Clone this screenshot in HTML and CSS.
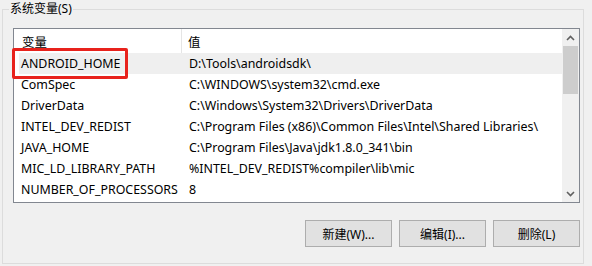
FILE: index.html
```html
<!DOCTYPE html>
<html lang="zh-CN">
  <head>
    <meta charset="UTF-8" />
    <meta name="viewport" content="width=device-width, initial-scale=1.0" />
    <title>系统变量</title>
    <link rel="stylesheet" href="styles.css">
  </head>
  <body>
    <fieldset class="group">
      <legend>系统变量(S)</legend>
      <div class="listbox">
        <div class="list">
          <div class="header">
            <div class="name">变量</div>
            <div class="value">值</div>
          </div>
          <div class="row selected">
            <div class="name marked">ANDROID_HOME</div>
            <div class="value">D:\Tools\androidsdk\</div>
          </div>
          <div class="row">
            <div class="name">ComSpec</div>
            <div class="value">C:\WINDOWS\system32\cmd.exe</div>
          </div>
          <div class="row">
            <div class="name">DriverData</div>
            <div class="value">C:\Windows\System32\Drivers\DriverData</div>
          </div>
          <div class="row">
            <div class="name">INTEL_DEV_REDIST</div>
            <div class="value">C:\Program Files (x86)\Common Files\Intel\Shared Libraries\</div>
          </div>
          <div class="row">
            <div class="name">JAVA_HOME</div>
            <div class="value">C:\Program Files\Java\jdk1.8.0_341\bin</div>
          </div>
          <div class="row">
            <div class="name">MIC_LD_LIBRARY_PATH</div>
            <div class="value">%INTEL_DEV_REDIST%compiler\lib\mic</div>
          </div>
          <div class="row">
            <div class="name">NUMBER_OF_PROCESSORS</div>
            <div class="value">8</div>
          </div>
        </div>
        <div class="scrollbar">
          <div class="arrow">
            <svg width="9" height="6" viewBox="0 0 9 6"><path d="M1 5 L4.5 1.5 L8 5" fill="none" stroke="#606060" stroke-width="1.6"/></svg>
          </div>
          <div class="track"><div class="thumb"></div></div>
          <div class="arrow">
            <svg width="9" height="6" viewBox="0 0 9 6"><path d="M1 1 L4.5 4.5 L8 1" fill="none" stroke="#606060" stroke-width="1.6"/></svg>
          </div>
        </div>
      </div>
      <div class="buttons">
        <button>新建(W)...</button>
        <button>编辑(I)...</button>
        <button>删除(L)</button>
      </div>
    </fieldset>
  </body>
</html>
```

FILE: styles.css
```css
*,
*::after {
  box-sizing: border-box;
}
body {
  margin: 0;
  background: #f0f0f0;
  color: #000;
  font-family: "Noto Sans", "Noto Sans CJK SC", sans-serif;
  font-size: 12.4px;
}
.group {
  margin: 1px 8px 0 2px;
  width: 582px;
  height: 263px;
  border: 1px solid #dcdcdc;
  padding: 11px 3px 0 10px;
  min-inline-size: 0;
}
.group legend {
  padding: 0 1px;
  margin-left: -4px;
  line-height: 16px;
  font-size: 12px;
}
.listbox {
  width: 567px;
  height: 175px;
  border: 1px solid #828790;
  background: #fff;
  display: flex;
}
.list {
  flex: 1;
}
.header {
  display: flex;
  height: 24px;
  align-items: center;
}
.header .name {
  width: 168px;
  height: 100%;
  padding: 4px 0 0 8px;
  border-right: 1px solid #e5e5e5;
}
.header .value {
  padding: 4px 0 0 6px;
  height: 100%;
}
.row {
  display: flex;
  height: 21px;
  line-height: 21px;
  margin-left: 5px;
  white-space: nowrap;
}
.row .name {
  width: 164px;
  padding-left: 2px;
  flex-shrink: 0;
}
.row .value {
  padding-left: 6px;
}
.row.selected {
  background: #efefef;
}
.marked {
  position: relative;
}
.marked::after {
  content: "";
  position: absolute;
  left: -7px;
  top: -5px;
  width: 116px;
  height: 31px;
  border: 3px solid #e8221c;
  border-radius: 2px;
}
.scrollbar {
  width: 17px;
  background: #f0f0f0;
  display: flex;
  flex-direction: column;
}
.arrow {
  height: 17px;
  display: flex;
  align-items: center;
  justify-content: center;
}
.track {
  flex: 1;
}
.thumb {
  height: 48px;
  margin: 0 1px;
  background: #cdcdcd;
}
.buttons {
  display: flex;
  justify-content: flex-end;
  gap: 7px;
  margin-top: 17px;
  width: 567px;
}
.buttons button {
  width: 87px;
  height: 27px;
  background: #e1e1e1;
  border: 1px solid #adadad;
  font-family: "Noto Sans", "Noto Sans CJK SC", sans-serif;
  font-size: 12px;
  color: #000;
  padding: 0;
}
```
